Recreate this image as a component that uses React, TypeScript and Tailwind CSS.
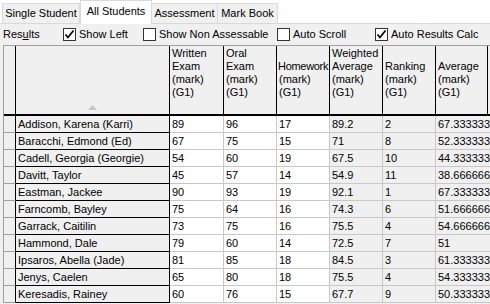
import React from "react";

type Col = { label: string[]; w: string; gray: boolean };

const cols: Col[] = [
  { label: ["Written", "Exam", "(mark)", "(G1)"], w: "w-[54px]", gray: false },
  { label: ["Oral", "Exam", "(mark)", "(G1)"], w: "w-[53px]", gray: false },
  { label: ["Homework", "(mark)", "(G1)"], w: "w-[53px]", gray: false },
  { label: ["Weighted", "Average", "(mark)", "(G1)"], w: "w-[53px]", gray: true },
  { label: ["Ranking", "(mark)", "(G1)"], w: "w-[53px]", gray: true },
  { label: ["Average", "(mark)", "(G1)"], w: "w-[52px]", gray: true },
];

const rows: string[][] = [
  ["Addison, Karena (Karri)", "89", "96", "17", "89.2", "2", "67.333333"],
  ["Baracchi, Edmond (Ed)", "67", "75", "15", "71", "8", "52.333333"],
  ["Cadell, Georgia (Georgie)", "54", "60", "19", "67.5", "10", "44.333333"],
  ["Davitt, Taylor", "45", "57", "14", "54.9", "11", "38.666666"],
  ["Eastman, Jackee", "90", "93", "19", "92.1", "1", "67.333333"],
  ["Farncomb, Bayley", "75", "64", "16", "74.3", "6", "51.666666"],
  ["Garrack, Caitilin", "73", "75", "16", "75.5", "4", "54.666666"],
  ["Hammond, Dale", "79", "60", "14", "72.5", "7", "51"],
  ["Ipsaros, Abella (Jade)", "81", "85", "18", "84.5", "3", "61.333333"],
  ["Jenys, Caelen", "65", "80", "18", "75.5", "4", "54.333333"],
  ["Keresadis, Rainey", "60", "76", "15", "67.7", "9", "50.333333"],
];

function Check({ checked, label, w }: { checked: boolean; label: string; w: string }) {
  return (
    <div className={`flex items-center ${w} shrink-0`}>
      <div className="w-[13px] h-[13px] bg-white border border-[#333333] flex items-center justify-center">
        {checked && (
          <svg width="11" height="11" viewBox="0 0 11 11">
            <path d="M1.5 5.5 L4 8.5 L9.5 1.5" fill="none" stroke="#000" strokeWidth="1.7" />
          </svg>
        )}
      </div>
      <span className="ml-[3px] whitespace-nowrap">{label}</span>
    </div>
  );
}

export default function App() {
  return (
    <div className="w-[490px] h-[304px] overflow-hidden bg-white font-['Liberation_Sans',Arial,sans-serif] text-[11px] text-black leading-none">
      {/* Tabs */}
      <div className="h-[24px] flex items-end pl-[2px] border-b border-[#d9d9d9]">
        <div className="w-[78px] h-[21px] -mb-px bg-[#f0f0f0] border border-[#d9d9d9] flex items-center justify-center">
          Single Student
        </div>
        <div className="w-[72px] h-[24px] -mb-px bg-white border border-b-0 border-[#d9d9d9] flex items-center justify-center pb-[2px] z-10">
          All Students
        </div>
        <div className="w-[66px] h-[21px] -mb-px bg-[#f0f0f0] border border-l-0 border-[#d9d9d9] flex items-center justify-center">
          Assessment
        </div>
        <div className="w-[60px] h-[21px] -mb-px bg-[#f0f0f0] border border-l-0 border-[#d9d9d9] flex items-center justify-center">
          Mark Book
        </div>
      </div>

      {/* Panel */}
      <div className="bg-[#f0f0f0] h-[280px]">
        <div className="h-[21px] flex items-center">
          <div className="w-[63px] pl-[3px] shrink-0">
            Res<span className="underline">u</span>lts
          </div>
          <Check checked label="Show Left" w="w-[80px]" />
          <Check checked={false} label="Show Non Assessable" w="w-[134px]" />
          <Check checked={false} label="Auto Scroll" w="w-[98px]" />
          <Check checked label="Auto Results Calc" w="w-[120px]" />
        </div>

        {/* Grid */}
        <div className="ml-[3px] border-l border-t border-[#a0a0a0] bg-white">
          {/* Header */}
          <div className="flex h-[70px] border-b-2 border-black">
            <div className="w-[12px] shrink-0 bg-[#f0f0f0] border-r border-black" />
            <div className="w-[154px] shrink-0 bg-[#f0f0f0] border-r border-black flex items-end justify-center pb-[4px]">
              <svg width="9" height="5" viewBox="0 0 9 5">
                <path d="M0 5 L4.5 0 L9 5 Z" fill="#c8c8c8" />
              </svg>
            </div>
            {cols.map((c, i) => (
              <div
                key={i}
                className={`${c.w} shrink-0 bg-[#f0f0f0] border-r border-black flex flex-col justify-end pb-[15px] pl-[2px] leading-[13px] whitespace-nowrap overflow-hidden`}
              >
                {c.label.map((l, j) => (
                  <div key={j} className={l === "Homework" ? "-ml-[1px] tracking-[-0.3px]" : ""}>
                    {l}
                  </div>
                ))}
              </div>
            ))}
            <div className="flex-1 bg-[#f0f0f0]" />
          </div>

          {/* Body */}
          {rows.map((r, i) => (
            <div key={i} className="flex h-[17px]">
              <div className="w-[12px] shrink-0 bg-[#f0f0f0] border-r border-b border-r-black border-b-[#a0a0a0]" />
              <div className="w-[154px] shrink-0 bg-[#f0f0f0] border-r border-b border-black pl-[2px] leading-[16px] whitespace-nowrap overflow-hidden">
                {r[0]}
              </div>
              {cols.map((c, j) => (
                <div
                  key={j}
                  className={`${j === cols.length - 1 ? "flex-1" : c.w + " shrink-0 border-r"} ${c.gray ? "bg-[#f0f0f0]" : "bg-white"} border-b border-[#c8c8c8] pl-[2px] leading-[16px] whitespace-nowrap overflow-hidden`}
                >
                  {r[j + 1]}
                </div>
              ))}
            </div>
          ))}
        </div>
      </div>
    </div>
  );
}
